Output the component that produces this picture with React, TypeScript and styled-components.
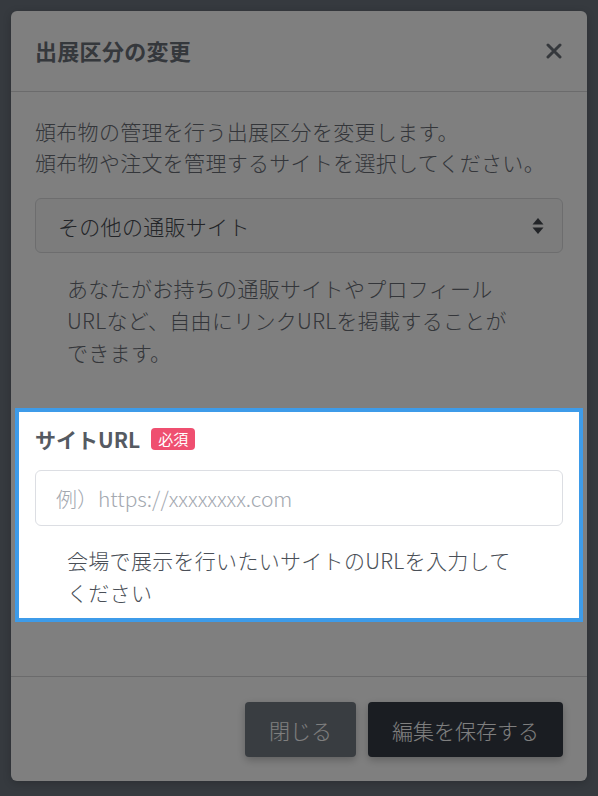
import React from "react";
import styled, { createGlobalStyle } from "styled-components";

const GlobalStyle = createGlobalStyle`
  html, body {
    margin: 0;
    padding: 0;
    background: #6c747e;
    font-family: "Noto Sans CJK JP", "Noto Sans", sans-serif;
  }
  * { box-sizing: border-box; }
`;

const Page = styled.div`
  padding: 11px 11px 15px;
  min-height: 796px;
`;

const Modal = styled.div`
  width: 576px;
  background: #ffffff;
  border-radius: 6px;
  box-shadow: 0 2px 8px rgba(0, 0, 0, 0.2);
`;

const Header = styled.div`
  display: flex;
  align-items: center;
  justify-content: space-between;
  padding: 23px 24px 24px;
  border-bottom: 1px solid #d6d7d9;
`;

const Title = styled.h2`
  margin: 0;
  font-size: 22px;
  line-height: 33px;
  font-weight: 700;
  letter-spacing: 0.3px;
  color: #6b7079;
`;

const CloseButton = styled.button`
  display: flex;
  align-items: center;
  justify-content: center;
  width: 18px;
  height: 18px;
  padding: 0;
  border: 0;
  background: transparent;
  color: #6b7079;
`;

const Body = styled.div`
  padding: 24px 24px 54px;
`;

const Lead = styled.p`
  margin: 0;
  font-size: 21px;
  font-weight: 300;
  line-height: 31px;
  letter-spacing: 0.3px;
  color: #686c74;
  white-space: nowrap;
`;

const SelectBox = styled.div`
  display: flex;
  align-items: center;
  justify-content: space-between;
  height: 55px;
  margin-top: 20px;
  padding: 0 18px 0 22px;
  border: 1px solid #dadbdd;
  border-radius: 6px;
  background: #f8f8f9;
`;

const SelectValue = styled.span`
  font-size: 21px;
  font-weight: 300;
  letter-spacing: 0.3px;
  color: #45494f;
`;

const Hint = styled.p<{ $top: number }>`
  margin: ${(p) => p.$top}px 0 0;
  padding-left: 32px;
  font-size: 21px;
  font-weight: 300;
  line-height: 32px;
  letter-spacing: 0.3px;
  white-space: nowrap;
  color: ${(p) => (p.$top > 18 ? "#686c74" : "#4a4f57")};
`;

const Spotlight = styled.section`
  position: relative;
  z-index: 2;
  margin: 40px -20px 0;
  padding: 12px 16px 10px;
  background: #ffffff;
  border: 4px solid #3d9be9;
`;

const LabelRow = styled.div`
  display: flex;
  align-items: center;
  gap: 11px;
  height: 30px;
`;

const Label = styled.span`
  font-size: 21px;
  font-weight: 700;
  color: #555a62;
`;

const Badge = styled.span`
  display: inline-flex;
  align-items: center;
  justify-content: center;
  width: 44px;
  height: 22px;
  border-radius: 4px;
  background: #ef4f70;
  color: #ffffff;
  font-size: 15px;
  line-height: 22px;
`;

const Input = styled.input`
  display: block;
  width: 100%;
  height: 56px;
  margin-top: 16px;
  padding: 0 20px;
  border: 1px solid #dcdee3;
  border-radius: 6px;
  background: #ffffff;
  font-family: inherit;
  font-size: 21px;
  font-weight: 300;
  color: #333;
  outline: none;
  &::placeholder {
    color: #a3a8b0;
  }
`;

const Footer = styled.div`
  display: flex;
  justify-content: flex-end;
  gap: 12px;
  padding: 25px 24px 24px;
  border-top: 1px solid #d6d7d9;
`;

const Button = styled.button<{ $variant: "secondary" | "dark" }>`
  height: 55px;
  padding: 0 24px;
  border: 0;
  border-radius: 4px;
  font-family: inherit;
  font-size: 21px;
  font-weight: 300;
  color: #ffffff;
  background: ${(p) => (p.$variant === "dark" ? "#343a44" : "#737a83")};
  box-shadow: 0 3px 8px rgba(0, 0, 0, 0.25);
`;

const Overlay = styled.div`
  position: fixed;
  inset: 0;
  z-index: 1;
  background: rgba(0, 0, 0, 0.5);
`;

export default function App() {
  return (
    <>
      <GlobalStyle />
      <Page>
        <Modal>
          <Header>
            <Title>出展区分の変更</Title>
            <CloseButton aria-label="close">
              <svg width="16" height="16" viewBox="0 0 16 16">
                <path
                  d="M2 2 L14 14 M14 2 L2 14"
                  stroke="currentColor"
                  strokeWidth="3"
                  strokeLinecap="round"
                />
              </svg>
            </CloseButton>
          </Header>
          <Body>
            <Lead>
              頒布物の管理を行う出展区分を変更します。
              <br />
              頒布物や注文を管理するサイトを選択してください。
            </Lead>
            <SelectBox>
              <SelectValue>その他の通販サイト</SelectValue>
              <svg width="12" height="18" viewBox="0 0 12 18">
                <path d="M6 1 L11.5 7.5 H0.5 Z" fill="#45494f" />
                <path d="M6 17 L11.5 10.5 H0.5 Z" fill="#45494f" />
              </svg>
            </SelectBox>
            <Hint $top={19}>
              あなたがお持ちの通販サイトやプロフィール
              <br />
              URLなど、自由にリンクURLを掲載することが
              <br />
              できます。
            </Hint>
            <Spotlight>
              <LabelRow>
                <Label>サイトURL</Label>
                <Badge>必須</Badge>
              </LabelRow>
              <Input placeholder="例）https://xxxxxxxx.com" />
              <Hint $top={18}>
                会場で展示を行いたいサイトのURLを入力して
                <br />
                ください
              </Hint>
            </Spotlight>
          </Body>
          <Footer>
            <Button $variant="secondary">閉じる</Button>
            <Button $variant="dark">編集を保存する</Button>
          </Footer>
        </Modal>
        <Overlay />
      </Page>
    </>
  );
}
